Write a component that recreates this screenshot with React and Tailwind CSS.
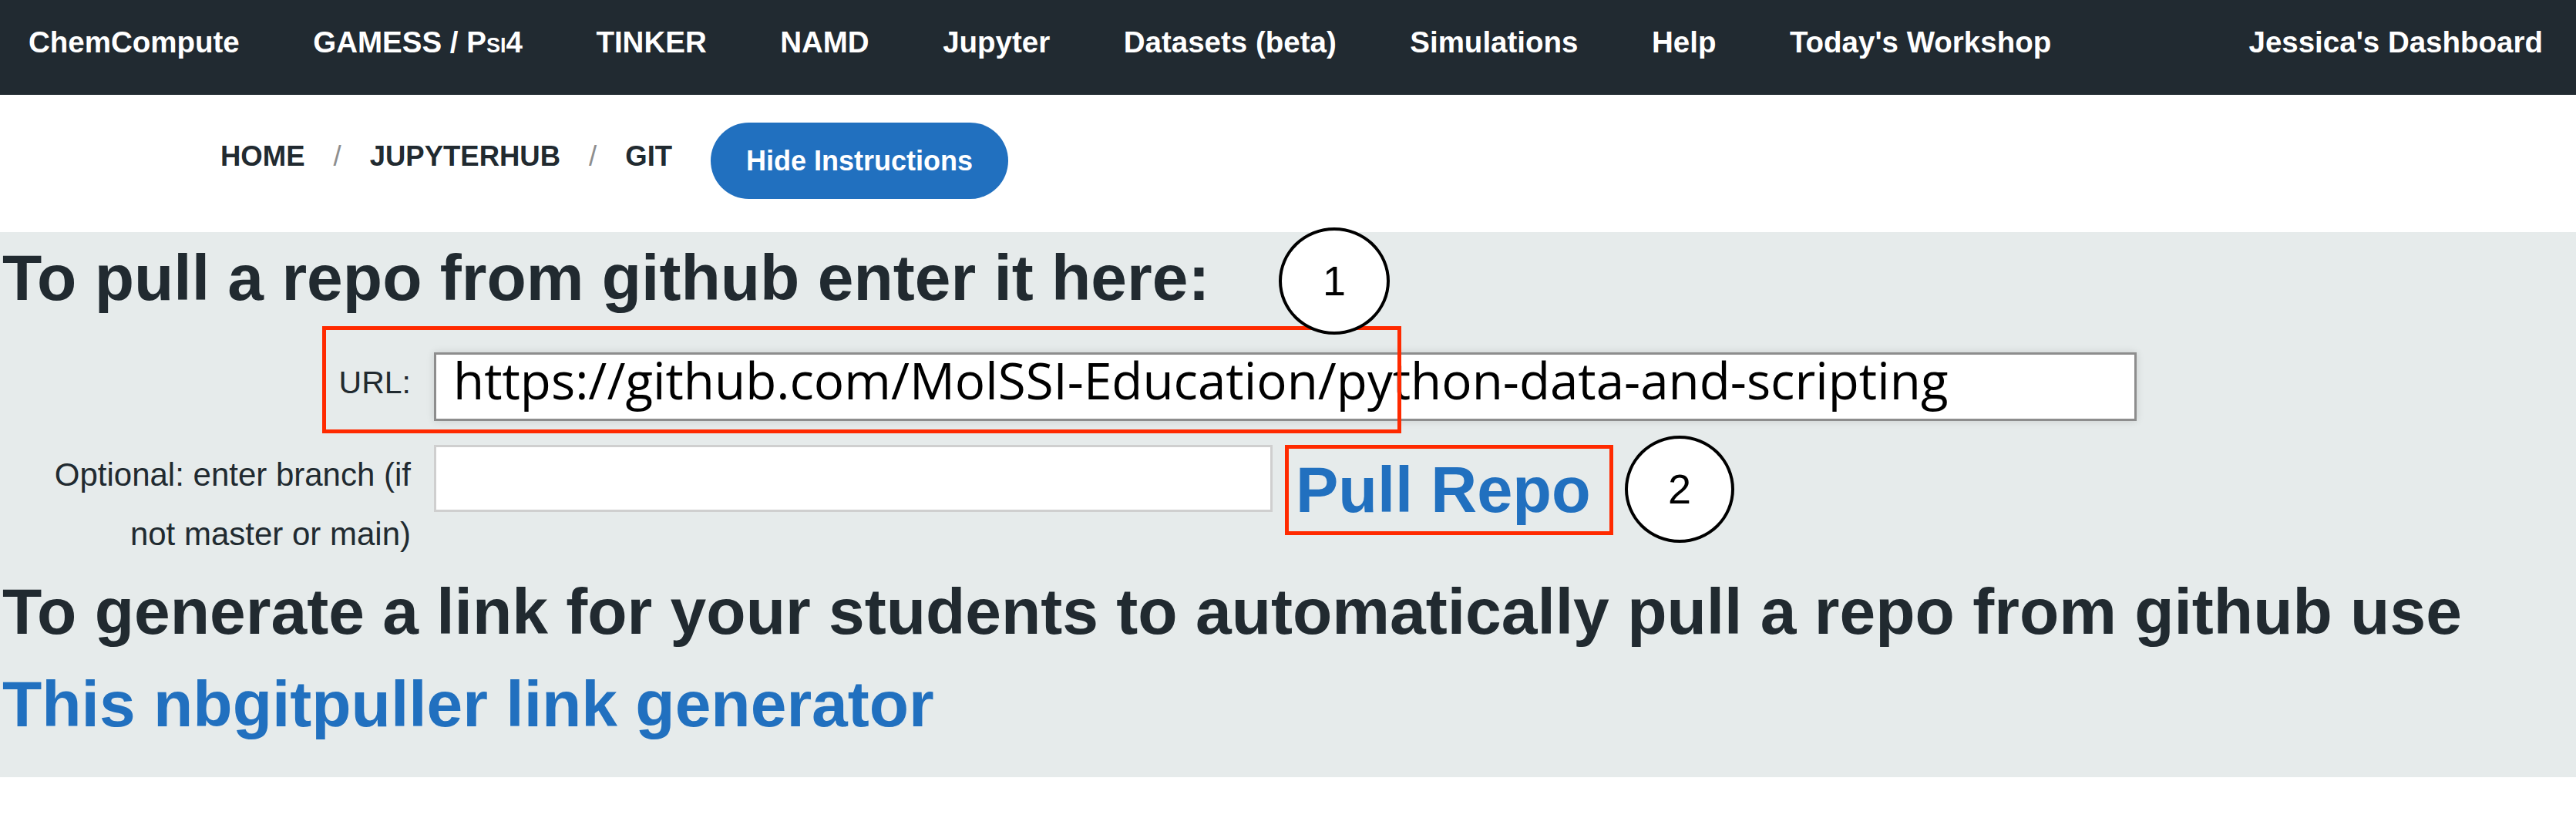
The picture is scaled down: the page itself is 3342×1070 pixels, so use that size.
import React from "react";

const NAV = [
  "ChemCompute",
  "GAMESS",
  "TINKER",
  "NAMD",
  "Jupyter",
  "Datasets (beta)",
  "Simulations",
  "Help",
  "Today's Workshop",
];

function Circle({ n, className }) {
  return (
    <div
      className={
        "absolute z-20 flex items-center justify-center rounded-[50%] border-[4px] border-black bg-white text-[54px] leading-none text-black " +
        className
      }
    >
      <span className="-mt-[2px]">{n}</span>
    </div>
  );
}

export default function App() {
  return (
    <div className="min-h-[1070px] bg-white font-['Liberation_Sans',Arial,sans-serif] text-[#212a30]">
      {/* Top navbar */}
      <nav className="flex h-[123px] items-start justify-between bg-[#212a31] pl-[37px] pr-[43px] pt-[33px] text-[38.5px] font-bold leading-[44px] text-white">
        <ul className="flex gap-[95.5px]">
          {NAV.map((item) => (
            <li key={item}>
              {item === "GAMESS" ? (
                <span>
                  GAMESS / P<span className="text-[27px]">SI</span>4
                </span>
              ) : (
                item
              )}
            </li>
          ))}
        </ul>
        <div>Jessica's Dashboard</div>
      </nav>

      {/* Breadcrumb */}
      <div className="flex h-[178px] items-start pl-[286px] pt-[36px]">
        <div className="flex h-[99px] items-center">
          <ol className="mb-[12px] flex items-center text-[36.5px] font-bold leading-[44px]">
            <li>HOME</li>
            <li className="mx-[37px] font-normal text-[#8e8e8e]">/</li>
            <li>JUPYTERHUB</li>
            <li className="mx-[37px] font-normal text-[#8e8e8e]">/</li>
            <li>GIT</li>
          </ol>
          <button className="ml-[50px] flex h-[99px] items-center rounded-full bg-[#2170bf] px-[46px] text-[36px] font-bold leading-none text-white">
            Hide Instructions
          </button>
        </div>
      </div>

      {/* Main content */}
      <main className="relative bg-[#e6ebeb] pb-[45px] pl-[3px] pt-[9px]">
        <h1 className="text-[84px] font-bold leading-[100px]">
          To pull a repo from github enter it here:
        </h1>

        {/* URL row */}
        <div className="mt-[47px] flex h-[89px] items-start">
          <label className="w-[530px] pt-[17px] text-right text-[41px] leading-[44px]">
            URL:
          </label>
          <input
            readOnly
            value="https://github.com/MolSSI-Education/python-data-and-scripting"
            className="ml-[30px] box-border h-[89px] w-[2209px] border-[3px] border-[#8d8d8d] bg-white pb-[16px] pl-[22px] font-['Open_Sans',sans-serif] text-[65.5px] text-black shadow-[0_0_10px_rgba(0,0,0,0.12)] outline-none"
          />
        </div>

        {/* Branch row */}
        <div className="mt-[31px] flex items-start">
          <label className="box-border w-[530px] pl-[55px] text-right text-[42px] leading-[77px]">
            Optional: enter branch (if not master or main)
          </label>
          <input
            readOnly
            className="ml-[30px] box-border h-[87px] w-[1088px] border-[3px] border-[#cfcfcf] bg-white outline-none"
          />
          <button className="relative z-10 ml-[16px] box-border h-[117px] w-[426px] border-[5px] border-[#ff2a00] pl-[9px] text-left text-[83px] font-bold leading-[107px] text-[#2170bf]">
            Pull Repo
          </button>
        </div>

        <h2 className="mt-[12px] text-[84px] font-bold leading-[100px]">
          To generate a link for your students to automatically pull a repo
          from github use
        </h2>
        <a className="mt-[20px] block text-[84px] font-bold leading-[100px] text-[#2170bf]">
          This nbgitpuller link generator
        </a>

        {/* Annotations */}
        <div className="absolute left-[418px] top-[122px] z-10 box-border h-[139px] w-[1400px] border-[5px] border-[#ff2a00]" />
        <Circle n="1" className="left-[1659px] top-[-6px] h-[139px] w-[144px]" />
        <Circle n="2" className="left-[2108px] top-[264px] h-[139px] w-[142px]" />
      </main>
    </div>
  );
}
